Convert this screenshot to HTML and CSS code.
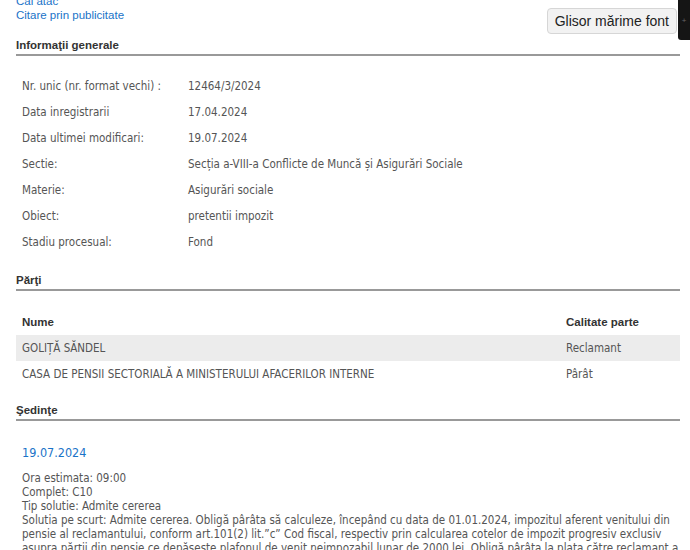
FILE: index.html
```html
<!DOCTYPE html>
<html lang="ro">
<head>
  <meta charset="UTF-8" />
  <meta name="viewport" content="width=device-width, initial-scale=1.0" />
  <title>Dosar 12464/3/2024</title>
  <link rel="stylesheet" href="styles.css">
</head>
<body>
  <div class="top">
    <div class="links">
      <a href="#">Cai atac</a>
      <a href="#">Citare prin publicitate</a>
    </div>
    <button class="font-btn">Glisor mărime font</button>
  </div>
  <div class="side-tab"><span>+</span></div>

  <h2 class="section-title">Informaţii generale</h2>
  <div class="info">
    <div class="info-row"><span class="label">Nr. unic (nr. format vechi) :</span><span>12464/3/2024</span></div>
    <div class="info-row"><span class="label">Data inregistrarii</span><span>17.04.2024</span></div>
    <div class="info-row"><span class="label">Data ultimei modificari:</span><span>19.07.2024</span></div>
    <div class="info-row"><span class="label">Sectie:</span><span>Secția a-VIII-a Conflicte de Muncă și Asigurări Sociale</span></div>
    <div class="info-row"><span class="label">Materie:</span><span>Asigurări sociale</span></div>
    <div class="info-row"><span class="label">Obiect:</span><span>pretentii impozit</span></div>
    <div class="info-row"><span class="label">Stadiu procesual:</span><span>Fond</span></div>
  </div>

  <h2 class="section-title">Părţi</h2>
  <div class="parties">
    <div class="party head"><span>Nume</span><span>Calitate parte</span></div>
    <div class="party odd"><span>GOLIȚĂ SĂNDEL</span><span>Reclamant</span></div>
    <div class="party"><span>CASA DE PENSII SECTORIALĂ A MINISTERULUI AFACERILOR INTERNE</span><span>Pârât</span></div>
  </div>

  <h2 class="section-title">Şedinţe</h2>
  <div class="hearing">
    <a href="#" class="hearing-date">19.07.2024</a>
    <p>
      Ora estimata: 09:00<br>
      Complet: C10<br>
      Tip solutie: Admite cererea<br>
      Solutia pe scurt: Admite cererea. Obligă pârâta să calculeze, începând cu data de 01.01.2024, impozitul aferent venitului din pensie al reclamantului, conform art.101(2) lit.”c” Cod fiscal, respectiv prin calcularea cotelor de impozit progresiv exclusiv asupra părţii din pensie ce depăşeşte plafonul de venit neimpozabil lunar de 2000 lei. Obligă pârâta la plata către reclamant a sumelor reţinute cu titlu de impozit.
    </p>
  </div>
</body>
</html>
```

FILE: styles.css
```css
body {
  margin: 0;
  padding: 0 10px 0 16px;
  font-family: "Liberation Sans", Arial, sans-serif;
  font-size: 11.5px;
  color: #555;
  background: #fff;
  overflow: hidden;
}
a {
  color: #1a73c8;
  text-decoration: none;
}
.top {
  display: flex;
  justify-content: space-between;
  align-items: flex-start;
  margin-top: -6px;
}
.links {
  display: flex;
  flex-direction: column;
  line-height: 14px;
}
.font-btn {
  margin-top: 14px;
  margin-right: 3px;
  height: 26px;
  padding: 0 7px;
  font-family: "Liberation Sans", Arial, sans-serif;
  font-size: 14px;
  color: #222;
  background: #f2f2f2;
  border: 1px solid #d6d6d6;
  border-radius: 4px;
}
.side-tab {
  position: absolute;
  top: 0;
  right: 0;
  width: 12px;
  height: 40px;
  background: #151515;
  border-radius: 0 0 0 3px;
  color: #666;
  font-size: 8px;
  display: flex;
  align-items: center;
  justify-content: center;
}
.section-title {
  margin: 0;
  padding: 3px 0 1px;
  font-size: 11.5px;
  font-weight: bold;
  color: #333;
  border-bottom: 2px solid #999;
  line-height: 16px;
}
.info {
  padding: 17px 0 14px;
  font-family: "DejaVu Sans Condensed", "DejaVu Sans", sans-serif;
  font-size: 11.5px;
}
.info-row {
  display: grid;
  grid-template-columns: 166px 1fr;
  padding: 0 6px;
  height: 26px;
  align-items: center;
}
.parties {
  padding: 17px 0 12px;
  font-family: "DejaVu Sans Condensed", "DejaVu Sans", sans-serif;
  font-size: 11.5px;
}
.party {
  display: grid;
  grid-template-columns: 1fr 108px;
  padding: 0 6px;
  height: 26px;
  align-items: center;
}
.party.head {
  font-family: "Liberation Sans", Arial, sans-serif;
  font-weight: bold;
  color: #333;
  height: 27px;
}
.party.odd {
  background: #ececec;
}
.hearing {
  padding: 24px 0 0 6px;
  font-family: "DejaVu Sans Condensed", "DejaVu Sans", sans-serif;
  font-size: 11.5px;
}
.hearing-date {
  font-size: 12.5px;
  line-height: 15px;
  display: block;
}
.hearing p {
  margin: 11px -8px 0 0;
  line-height: 14px;
}
```
